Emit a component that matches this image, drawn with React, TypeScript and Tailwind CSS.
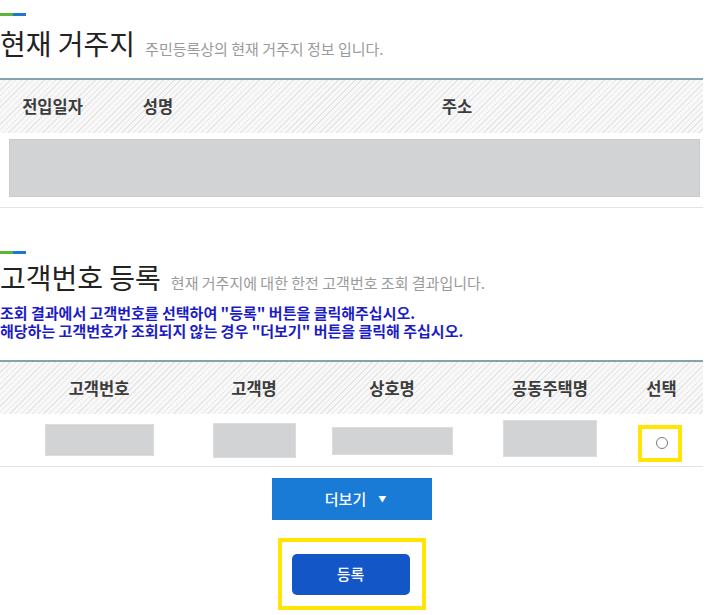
import React from "react";

const font = { fontFamily: '"Noto Sans CJK KR", "Noto Sans", sans-serif' };

function Accent() {
  return (
    <div className="flex h-[3px] w-[26px]">
      <div className="h-full w-[13px] bg-[#5db535]" />
      <div className="h-full w-[13px] bg-[#1d78cc]" />
    </div>
  );
}

function Title({ title, sub }: { title: string; sub: string }) {
  return (
    <div className="flex h-[40px] items-baseline leading-[40px]">
      <span className="text-[28px] text-[#222]">{title}</span>
      <span className="ml-[10px] text-[15px] text-[#9a9a9a]">{sub}</span>
    </div>
  );
}

const stripes =
  "bg-[repeating-linear-gradient(135deg,#f8f8f8_0px,#f8f8f8_3px,#e6e6e6_3px,#e6e6e6_4px)]";

export default function App() {
  return (
    <div className="w-[703px] bg-white" style={font}>
      {/* Section 1 */}
      <div className="pt-[13px]">
        <Accent />
        <div className="mt-[7px]">
          <Title title="현재 거주지" sub="주민등록상의 현재 거주지 정보 입니다." />
        </div>
        <div className="mt-[15px] border-t-2 border-[#86a2ae]">
          <div
            className={`grid h-[53px] grid-cols-[105px_106px_1fr] items-center text-[16.5px] font-bold text-[#3c3c3c] ${stripes}`}
          >
            <div className="text-center">전입일자</div>
            <div className="text-center">성명</div>
            <div className="text-center">주소</div>
          </div>
          <div className="h-[75px] border-b border-[#e3e3e3] pl-[9px] pr-[3px] pt-[6px]">
            <div className="h-[58px] border border-[#cbcbcb] bg-[#d2d3d5]" />
          </div>
        </div>
      </div>

      {/* Section 2 */}
      <div className="mt-[43px]">
        <Accent />
        <div className="mt-[3px]">
          <Title title="고객번호 등록" sub="현재 거주지에 대한 한전 고객번호 조회 결과입니다." />
        </div>
        <div className="mt-[7px] text-[15px] font-bold leading-[18px] text-[#1c1cc4]">
          <p>조회 결과에서 고객번호를 선택하여 "등록" 버튼을 클릭해주십시오.</p>
          <p>해당하는 고객번호가 조회되지 않는 경우 "더보기" 버튼을 클릭해 주십시오.</p>
        </div>
        <div className="mt-[20px] border-t-2 border-[#86a2ae]">
          <div
            className={`grid h-[52px] grid-cols-[198px_112px_164px_152px_1fr] items-center text-[16.5px] font-bold text-[#3c3c3c] ${stripes}`}
          >
            <div className="text-center">고객번호</div>
            <div className="text-center">고객명</div>
            <div className="text-center">상호명</div>
            <div className="text-center">공동주택명</div>
            <div className="pr-[6px] text-center">선택</div>
          </div>
          <div className="grid h-[53px] grid-cols-[198px_112px_164px_152px_1fr] items-center border-b border-[#e3e3e3]">
            <div className="flex justify-center">
              <div className="mt-[-1px] h-[32px] w-[109px] border border-[#dcdcdc] bg-[#d2d3d5]" />
            </div>
            <div className="flex justify-center">
              <div className="h-[35px] w-[83px] border border-[#dcdcdc] bg-[#d2d3d5]" />
            </div>
            <div className="flex justify-center">
              <div className="mt-[2px] h-[28px] w-[121px] border border-[#dcdcdc] bg-[#d2d3d5]" />
            </div>
            <div className="flex justify-center">
              <div className="mt-[-4px] h-[37px] w-[94px] border border-[#dcdcdc] bg-[#d2d3d5]" />
            </div>
            <div className="flex justify-start pl-[12px]">
              <div className="mt-[7px] flex h-[37px] w-[44px] items-center justify-center border-[4px] border-[#ffe500] bg-white">
                <div className="ml-[3px] mt-[-2px] h-[12px] w-[12px] rounded-full border border-[#7a7a7a] bg-white" />
              </div>
            </div>
          </div>
        </div>

        <div className="mt-[11px] flex justify-center">
          <button className="flex h-[42px] w-[160px] items-center justify-center bg-[#1a7bd6] pl-[8px] text-[15px] font-medium text-white">
            더보기
            <span className="ml-[12px] text-[8px]">▼</span>
          </button>
        </div>

        <div className="mt-[18px] flex justify-center">
          <div className="h-[72px] w-[148px] border-[4px] border-[#ffe500] pl-[10px] pt-[12px]">
            <button className="h-[41px] w-[118px] rounded-[5px] bg-[#1256c8] text-[15px] font-medium text-white">
              등록
            </button>
          </div>
        </div>
      </div>
    </div>
  );
}
